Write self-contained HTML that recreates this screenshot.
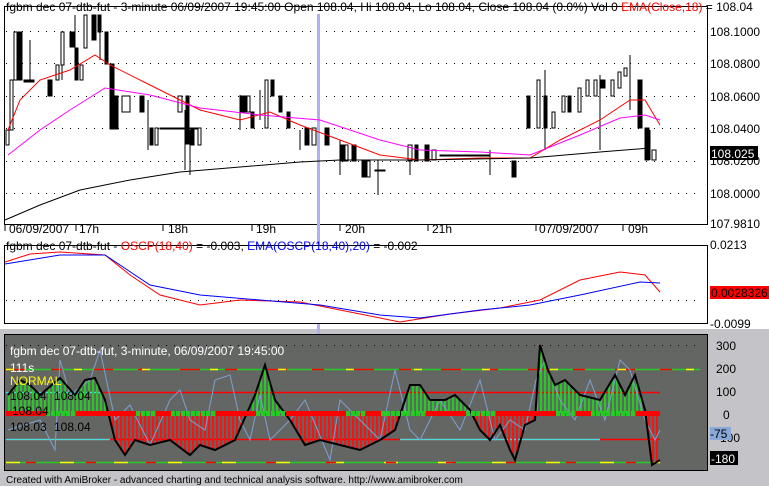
<!DOCTYPE html><html><head><style>
body{margin:0;width:769px;height:486px;overflow:hidden;background:#fff;font-family:"Liberation Sans",sans-serif}
</style></head><body>
<svg width="769" height="486" xmlns="http://www.w3.org/2000/svg" font-family="Liberation Sans, sans-serif" font-size="12">
<defs>
<pattern id="pg" width="4" height="10" patternUnits="userSpaceOnUse"><rect width="2" height="10" fill="#22cc22"/></pattern>
<pattern id="pr" width="4" height="10" patternUnits="userSpaceOnUse"><rect width="2" height="10" fill="#ff1010"/></pattern>
<clipPath id="osc"><polygon points="8,413 8,395 20,380 30,385 40,395 60,378 75,395 85,380 95,378 105,400 115,440 125,455 135,440 150,445 170,440 190,455 200,445 215,450 235,440 255,395 265,365 275,400 290,420 305,445 320,440 340,445 360,450 380,440 395,430 410,385 420,385 430,400 445,400 455,395 470,410 480,430 490,440 500,425 510,450 515,460 525,425 535,420 540,345 548,370 555,385 565,380 580,395 600,400 615,375 625,395 635,375 645,410 652,465 660,460 660,413"/></clipPath>
</defs>
<rect width="769" height="330" fill="#fff"/>
<rect y="329" width="769" height="157" fill="#c4c4c8"/>
<!-- main pane -->
<rect x="4.5" y="6.5" width="703" height="218" fill="#fff" stroke="#000"/>
<g stroke="#000" stroke-dasharray="1 7" stroke-width="1">
<line x1="6" y1="31.5" x2="700" y2="31.5"/><line x1="6" y1="63.5" x2="700" y2="63.5"/><line x1="6" y1="96.5" x2="700" y2="96.5"/><line x1="6" y1="128.5" x2="700" y2="128.5"/><line x1="6" y1="161.5" x2="700" y2="161.5"/><line x1="6" y1="193.5" x2="700" y2="193.5"/>
</g>
<rect x="317" y="14" width="3" height="456" fill="#b0b0f0"/>
<g stroke="#000" fill="#000">
<path d="M8 130V145M12 80V130M30 40V80M62 50V80M75 15V65M100 20V60M148 100V150M185 110V170M190 130V175M240 95V130M260 90V120M300 130V150M340 140V175M378 160V195M410 145V175M490 150V175M545 70V150M600 75V150M630 55V110M650 130V160" fill="none"/>
<rect x="6" y="130" width="3" height="15" fill="#fff"/>
<rect x="10" y="80" width="3" height="50" fill="#fff"/>
<rect x="14" y="32" width="3" height="48" fill="#fff"/>
<rect x="18" y="32" width="4" height="48"/>
<rect x="24" y="80" width="10" height="2"/>
<rect x="48" y="80" width="4" height="16"/>
<rect x="56" y="65" width="3" height="15" fill="#fff"/>
<rect x="61" y="32" width="3" height="33" fill="#fff"/>
<rect x="70" y="32" width="4" height="15"/>
<rect x="75" y="48" width="3" height="32"/>
<rect x="80" y="65" width="3" height="15" fill="#fff"/>
<rect x="84" y="15" width="3" height="33" fill="#fff"/>
<rect x="92" y="15" width="4" height="25"/>
<rect x="98" y="15" width="3" height="17"/>
<rect x="105" y="32" width="3" height="32"/>
<rect x="110" y="64" width="4" height="65"/>
<rect x="115" y="96" width="3" height="33"/>
<rect x="122" y="96" width="8" height="16" fill="#fff"/>
<rect x="140" y="96" width="4" height="16"/>
<rect x="150" y="128" width="3" height="17"/>
<rect x="155" y="128" width="3" height="17" fill="#fff"/>
<rect x="160" y="128" width="40" height="1"/>
<rect x="178" y="96" width="4" height="16" fill="#fff"/>
<rect x="186" y="96" width="3" height="48"/>
<rect x="191" y="128" width="3" height="17"/>
<rect x="198" y="128" width="3" height="17" fill="#fff"/>
<rect x="240" y="96" width="6" height="16"/>
<rect x="247" y="96" width="3" height="16" fill="#fff"/>
<rect x="251" y="112" width="3" height="16"/>
<rect x="265" y="80" width="3" height="48" fill="#fff"/>
<rect x="271" y="80" width="3" height="16"/>
<rect x="279" y="96" width="3" height="16"/>
<rect x="287" y="112" width="3" height="16"/>
<rect x="305" y="128" width="4" height="17"/>
<rect x="312" y="128" width="4" height="17" fill="#fff"/>
<rect x="325" y="128" width="4" height="17"/>
<rect x="340" y="145" width="4" height="16"/>
<rect x="345" y="145" width="3" height="16" fill="#fff"/>
<rect x="352" y="145" width="4" height="16"/>
<rect x="362" y="161" width="4" height="16"/>
<rect x="367" y="161" width="3" height="16" fill="#fff"/>
<rect x="375" y="170" width="10" height="1"/>
<rect x="408" y="145" width="4" height="16" fill="#fff"/>
<rect x="415" y="145" width="3" height="16"/>
<rect x="425" y="145" width="4" height="16"/>
<rect x="432" y="150" width="4" height="10" fill="#fff"/>
<rect x="440" y="155" width="50" height="1"/>
<rect x="512" y="161" width="4" height="16"/>
<rect x="527" y="96" width="3" height="32"/>
<rect x="537" y="80" width="3" height="48" fill="#fff"/>
<rect x="544" y="96" width="3" height="32"/>
<rect x="552" y="112" width="3" height="16" fill="#fff"/>
<rect x="562" y="96" width="3" height="16" fill="#fff"/>
<rect x="568" y="96" width="3" height="16"/>
<rect x="578" y="88" width="3" height="24" fill="#fff"/>
<rect x="586" y="80" width="3" height="16" fill="#fff"/>
<rect x="594" y="80" width="3" height="16" fill="#fff"/>
<rect x="601" y="80" width="4" height="8"/>
<rect x="611" y="80" width="3" height="16" fill="#fff"/>
<rect x="618" y="72" width="3" height="16" fill="#fff"/>
<rect x="624" y="68" width="3" height="8" fill="#fff"/>
<rect x="638" y="80" width="4" height="48"/>
<rect x="645" y="128" width="4" height="32"/>
<rect x="652" y="150" width="4" height="10" fill="#fff"/>
</g>
<polyline fill="none" stroke="#f00" points="8,130 20,100 40,80 70,70 95,55 110,65 150,85 200,110 240,120 270,112 300,125 340,140 380,155 420,160 480,158 530,158 560,140 600,120 630,100 645,100 660,125"/>
<polyline fill="none" stroke="#f0f" points="8,155 40,130 70,110 105,88 150,95 200,108 260,115 320,120 380,140 420,150 480,152 530,155 580,135 620,118 645,115 660,120"/>
<polyline fill="none" stroke="#000" points="5,220 40,205 80,190 130,180 180,172 240,167 300,162 340,160 420,160 530,158 600,152 650,148"/>
<g stroke="#000"><path d="M5 225v6M76 225v6M163 225v6M252 225v6M340 225v6M428 225v6M536 225v6M623 225v6"/></g>
<g font-size="12">
<text x="9" y="233">06/09/2007</text><text x="79" y="233">17h</text><text x="168" y="233">18h</text><text x="256" y="233">19h</text><text x="345" y="233">20h</text><text x="432" y="233">21h</text><text x="539" y="233">07/09/2007</text><text x="628" y="233">09h</text>
<text x="6" y="11">fgbm dec 07-dtb-fut - 3-minute 06/09/2007 19:45:00 Open 108.04, Hi 108.04, Lo 108.04, Close 108.04 (0.0%) Vol 0 <tspan fill="#f00">EMA(Close,18)</tspan> = 108.04</text>
<text x="710" y="36">108.1000</text><text x="710" y="68">108.0800</text><text x="710" y="101">108.0600</text><text x="710" y="133">108.0400</text><text x="710" y="165">108.0200</text><text x="710" y="198">108.0000</text><text x="710" y="228">107.9810</text>
</g>
<rect x="710" y="146" width="48" height="14" fill="#000"/><text x="711" y="158" fill="#fff">108.025</text>
<!-- pane 2 -->
<rect x="4.5" y="245.5" width="703" height="78" fill="#fff" stroke="#000"/>
<line x1="6" y1="300.5" x2="700" y2="300.5" stroke="#000" stroke-dasharray="1 7"/>
<polyline fill="none" stroke="#f00" points="5,262 30,254 60,252 105,255 130,275 160,295 200,305 240,300 300,302 350,312 400,322 450,314 500,308 540,300 580,280 620,272 645,275 660,292"/>
<polyline fill="none" stroke="#00f" points="5,264 60,255 105,255 150,285 200,295 260,300 320,305 380,315 420,318 480,310 530,305 580,295 640,282 660,283"/>
<text x="6" y="250">fgbm dec 07-dtb-fut - <tspan fill="#f00">OSCP(18,40)</tspan> = -0.003, <tspan fill="#00f">EMA(OSCP(18,40),20)</tspan> = -0.002</text>
<text x="710" y="249">0.0213</text><text x="710" y="328">-0.0099</text>
<rect x="710" y="286" width="59" height="13" fill="#f00"/><text x="711" y="297">0.0028326</text>
<!-- pane 3 -->
<rect x="4.5" y="334.5" width="703" height="136" fill="#646664" stroke="#000"/>
<line x1="6" y1="345.5" x2="700" y2="345.5" stroke="#000" stroke-dasharray="1 7"/>
<line x1="6" y1="369.5" x2="700" y2="369.5" stroke="#22cc22" stroke-width="1.5"/>
<line x1="6" y1="369.5" x2="700" y2="369.5" stroke="#f00" stroke-width="1.5" stroke-dasharray="20 25 12 30"/>
<line x1="6" y1="369.5" x2="700" y2="369.5" stroke="#ff0" stroke-width="1.5" stroke-dasharray="8 60"/>
<line x1="6" y1="392.5" x2="660" y2="392.5" stroke="#f00" stroke-width="1.5"/>
<line x1="6" y1="392.5" x2="100" y2="392.5" stroke="#4dd" stroke-width="1.5"/>
<line x1="6" y1="439.5" x2="660" y2="439.5" stroke="#f00" stroke-width="1.5"/>
<line x1="6" y1="439.5" x2="110" y2="439.5" stroke="#4dd" stroke-width="1.5"/>
<line x1="400" y1="439.5" x2="600" y2="439.5" stroke="#4dd" stroke-width="1.5"/>
<line x1="6" y1="462.5" x2="660" y2="462.5" stroke="#22cc22" stroke-width="1.5"/>
<line x1="6" y1="462.5" x2="660" y2="462.5" stroke="#ff0" stroke-width="1.5" stroke-dasharray="14 40"/>
<line x1="6" y1="462.5" x2="660" y2="462.5" stroke="#f00" stroke-width="1.5" stroke-dasharray="0 20 10 30"/>
<g clip-path="url(#osc)"><rect x="0" y="330" width="700" height="83" fill="url(#pg)"/><rect x="0" y="413" width="700" height="60" fill="url(#pr)"/></g>
<polyline fill="none" stroke="#7ea0d0" points="8,430 40,420 50,440 55,450 60,360 70,395 90,380 100,350 115,420 130,405 150,445 170,400 180,390 190,420 205,430 215,380 230,375 240,420 250,440 260,395 270,440 290,420 305,400 330,460 340,400 360,420 380,440 395,370 410,430 420,440 440,400 460,430 480,380 495,440 510,420 525,430 536,380 545,360 560,400 575,420 590,380 605,420 620,360 630,370 645,420 655,440 660,430"/>
<polyline fill="none" stroke="#000" stroke-width="2" points="8,395 20,380 30,385 40,395 60,378 75,395 85,380 95,378 105,400 115,440 125,455 135,440 150,445 170,440 190,455 200,445 215,450 235,440 255,395 265,365 275,400 290,420 305,445 320,440 340,445 360,450 380,440 395,430 410,385 420,385 430,400 445,400 455,395 470,410 480,430 490,440 500,425 510,450 515,460 525,425 535,420 540,345 548,370 555,385 565,380 580,395 600,400 615,375 625,395 635,375 645,410 652,465 660,460"/>
<line x1="6" y1="413.5" x2="660" y2="413.5" stroke="#22cc22" stroke-width="5" stroke-dasharray="4 1"/>
<line x1="6" y1="413.5" x2="660" y2="413.5" stroke="#f00" stroke-width="5" stroke-dasharray="40 30 60 20 15 45"/>
<g fill="#fff"><text x="10" y="355">fgbm dec 07-dtb-fut, 3-minute, 06/09/2007 19:45:00</text><text x="10" y="372">111s</text></g>
<text x="10" y="385" fill="#ff0">NORMAL</text>
<g fill="#000"><text x="10" y="400">108.04</text><text x="54" y="400">108.04</text><text x="12" y="415">108.04</text><text x="10" y="431">108.03</text><text x="54" y="431">108.04</text></g>
<g font-size="12"><text x="716" y="350">300</text><text x="716" y="373">200</text><text x="716" y="396">100</text><text x="723" y="419">0</text><text x="716" y="442">-100</text></g>
<rect x="710" y="427" width="21" height="13" fill="#88a8d8"/><text x="710" y="438">-75</text>
<rect x="710" y="451" width="28" height="14" fill="#000"/><text x="711" y="463" fill="#fff">-180</text>
<text x="6" y="483" font-size="10">Created with AmiBroker - advanced charting and technical analysis software. http://www.amibroker.com</text>
</svg>
</body></html>
